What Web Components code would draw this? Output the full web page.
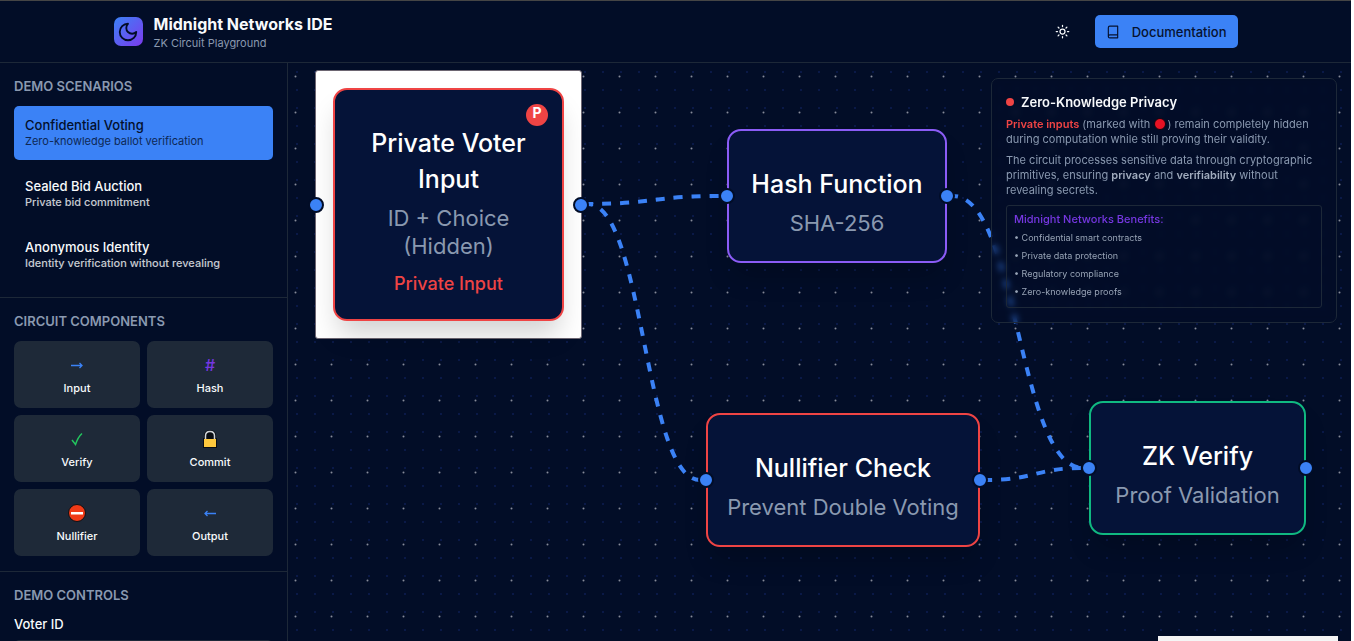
<!DOCTYPE html>
<html lang="en">
<head>
<meta charset="utf-8">
<title>Midnight Networks IDE</title>
<style>
  :root {
    --bg: #020d27; --card: #051338; --line: #1d2838; --muted: #8a99b0; --text: #f8fafc;
    --blue: #3b82f6; --purple: #7637e2; --violet: #8b5cf6; --red: #ef4444; --green: #10b981; --tile: #1e2938;
  }
  body { margin: 0; background: #fff; color: var(--text); font-family: Inter, "Liberation Sans", sans-serif; }
</style>
</head>
<body>
<midnight-app></midnight-app>
<script>
const define = (name, html, setup) => {
  const tpl = document.createElement('template');
  tpl.innerHTML = '<style>*{box-sizing:border-box}</style>' + html;
  customElements.define(name, class extends HTMLElement {
    constructor() {
      super();
      this.attachShadow({ mode: 'open' }).append(tpl.content.cloneNode(true));
    }
    connectedCallback() { if (setup) setup(this, this.shadowRoot); }
  });
};

define('app-header', `
<style>
  :host { display: block; background: var(--bg); border-bottom: 1px solid var(--line); }
  header { display: flex; align-items: center; justify-content: space-between; max-width: 1152px; height: 61px; margin: 0 auto; padding: 0 14px; }
  .brand { display: flex; align-items: center; gap: 11px; }
  .logo { width: 29px; height: 29px; border-radius: 7px; background: linear-gradient(135deg, #3b82f6, #7c3aed); display: grid; place-items: center; }
  h1 { margin: 0; font-size: 16px; line-height: 23px; font-weight: 700; }
  p { margin: 0; font-size: 11px; line-height: 15px; color: var(--muted); }
  .actions { display: flex; align-items: center; gap: 16px; }
  button { border: 0; background: none; color: var(--text); width: 33px; height: 33px; padding: 0; display: grid; place-items: center; }
  a { display: flex; align-items: center; gap: 12px; height: 33px; padding: 0 11px; border-radius: 5px; background: var(--blue); color: #061230; font-size: 13px; font-weight: 500; text-decoration: none; }
  svg { fill: none; stroke: currentColor; stroke-linecap: round; stroke-linejoin: round; stroke-width: 2; display: block; }
</style>
<header>
  <div class="brand">
    <div class="logo"><svg width="22" height="22" viewBox="0 0 24 24" style="color:#020c25"><path d="M12 3a6 6 0 0 0 9 9 9 9 0 1 1-9-9Z"/></svg></div>
    <div><h1>Midnight Networks IDE</h1><p>ZK Circuit Playground</p></div>
  </div>
  <div class="actions">
    <button aria-label="Toggle theme"><svg width="15" height="15" viewBox="0 0 24 24"><circle cx="12" cy="12" r="4"/><path d="M12 2v2M12 20v2M4.93 4.93l1.41 1.41M17.66 17.66l1.41 1.41M2 12h2M20 12h2M6.34 17.66l-1.41 1.41M19.07 4.93l-1.41 1.41"/></svg></button>
    <a href="#docs"><svg width="14" height="14" viewBox="0 0 24 24"><path d="M4 19.5v-15A2.5 2.5 0 0 1 6.5 2H20v20H6.5a2.5 2.5 0 0 1 0-5H20"/></svg>Documentation</a>
  </div>
</header>`);

define('side-section', `
<style>
  :host { display: block; padding: 14px 14px 15px; border-bottom: 1px solid var(--line); }
  h2 { margin: 0 0 11px; font-size: 13px; line-height: 18px; font-weight: 600; text-transform: uppercase; color: var(--muted); }
</style>
<h2></h2><slot></slot>`, (el, root) => { root.querySelector('h2').textContent = el.getAttribute('heading'); });

define('scenario-item', `
<style>
  :host { display: block; }
  button { display: block; width: 100%; height: 54px; padding: 10px 11px 12px; border: 0; border-radius: 5px; background: none; color: var(--text); font: 500 13px/18px Inter, sans-serif; text-align: left; }
  small { display: block; font-size: 11px; line-height: 14px; opacity: .8; font-weight: 500; }
  :host([active]) button { background: var(--blue); color: #03102c; }
  :host([active]) small { font-weight: 400; }
</style>
<button><slot></slot><small><slot name="note"></slot></small></button>`);

define('component-tile', `
<style>
  :host { display: block; }
  button { width: 100%; height: 67px; padding: 0 0 2px; border: 0; border-radius: 7px; background: var(--tile); color: var(--text); font: 500 11px/14px Inter, sans-serif; display: flex; flex-direction: column; align-items: center; justify-content: center; gap: 4px; }
  .icon { height: 24px; display: grid; place-items: center; font-size: 16px; line-height: 24px; }
</style>
<button><span class="icon"><slot name="icon"></slot></span><span><slot></slot></span></button>`);

define('app-sidebar', `
<style>
  :host { display: block; width: 288px; flex: none; border-right: 1px solid var(--line); overflow: hidden; }
  .list { display: grid; gap: 7px; }
  .tiles { display: grid; grid-template-columns: 1fr 1fr; gap: 7px; }
  svg { display: block; fill: none; }
  label { display: block; font-size: 13px; line-height: 18px; font-weight: 500; margin-bottom: 7px; }
  input { width: 100%; height: 36px; border: 1px solid var(--line); border-radius: 5px; background: var(--bg); color: var(--text); padding: 0 11px; font: 13px Inter, sans-serif; }
</style>
<aside>
  <side-section heading="Demo Scenarios"><div class="list">
    <scenario-item active>Confidential Voting<span slot="note">Zero-knowledge ballot verification</span></scenario-item>
    <scenario-item>Sealed Bid Auction<span slot="note">Private bid commitment</span></scenario-item>
    <scenario-item>Anonymous Identity<span slot="note">Identity verification without revealing</span></scenario-item>
  </div></side-section>
  <side-section heading="Circuit Components"><div class="tiles">
    <component-tile><svg slot="icon" width="14" height="14" viewBox="0 0 14 14" stroke="#3b82f6" stroke-width="1.300"><path d="M1 7.500H12M9.500 5L12 7.500L9.500 10"/></svg>Input</component-tile>
    <component-tile><span slot="icon" style="color:var(--purple)">#</span>Hash</component-tile>
    <component-tile><svg slot="icon" width="14" height="16" viewBox="0 0 14 16" stroke="#22c55e" stroke-width="1.500"><path d="M2 9L5.500 13.500Q8 6 12 2.500"/></svg>Verify</component-tile>
    <component-tile><svg slot="icon" width="16" height="20" viewBox="0 0 16 20"><path d="M1 9H2V7Q2 1 8 1T14 7V9H15V19H1Z" fill="#0a0d12"/><path d="M3.500 10V7Q3.500 2.500 8 2.500T12.500 7V10" stroke="#d0d3d8" stroke-width="1.500"/><rect x="2" y="10" width="12" height="8" fill="#ffc83d"/></svg>Commit</component-tile>
    <component-tile><svg slot="icon" width="18" height="18" viewBox="0 0 18 18"><circle cx="9" cy="9" r="8.500" fill="#f03a17" stroke="#0f1014"/><rect x="3" y="8" width="12" height="2.500" fill="#fff"/></svg>Nullifier</component-tile>
    <component-tile><svg slot="icon" width="14" height="14" viewBox="0 0 14 14" stroke="#3b82f6" stroke-width="1.300"><path d="M13 7.500H2M4.500 5L2 7.500L4.500 10"/></svg>Output</component-tile>
  </div></side-section>
  <side-section heading="Demo Controls">
    <label for="voter">Voter ID</label><input id="voter" type="text">
  </side-section>
</aside>`);

define('circuit-node', `
<style>
  :host { display: block; position: absolute; --accent: var(--red); }
  .card { position: relative; border: 2px solid var(--accent); border-radius: 14px; background: var(--card); padding: 35px 14px 24px; text-align: center; box-shadow: 0 18px 27px -5px rgba(0,0,0,.18); }
  h3 { margin: 0 0 7px; font-size: 25px; line-height: 36px; font-weight: 500; color: #fff; }
  p { margin: 0; font-size: 22px; line-height: 28px; color: var(--muted); }
  .note, .badge { display: none; }
  :host([private]) { background: #fff; border: 1px solid #6d6672; border-radius: 3px; padding: 17px; }
  :host([private]) .card { padding-bottom: 23px; }
  :host([private]) .note { display: block; margin-top: 11px; font-size: 18px; line-height: 25px; font-weight: 500; color: var(--red); }
  :host([private]) .badge { display: block; position: absolute; top: 14px; right: 14px; width: 22px; height: 22px; border-radius: 50%; background: var(--red); color: #fff; font-size: 14px; line-height: 18px; font-weight: 700; }
  i { position: absolute; top: 50%; width: 16px; height: 16px; margin-top: -8px; border: 2px solid var(--bg); border-radius: 50%; background: var(--blue); z-index: 1; }
  .in { left: -8px; } .out { right: -8px; }
</style>
<div class="card"><span class="badge">P</span><h3><slot></slot></h3><p><slot name="sub"></slot></p><div class="note"><slot name="note"></slot></div></div>
<i class="in"></i><i class="out"></i>`);

define('privacy-panel', `
<style>
  :host { display: block; position: absolute; top: 15px; right: 14px; width: 346px; padding: 14px; border: 1px solid var(--line); border-radius: 7px; background: rgba(2,13,39,.4); backdrop-filter: blur(3px); }
  h2 { display: flex; align-items: center; gap: 7px; margin: 0 0 6px; font-size: 13px; line-height: 18px; font-weight: 600; }
  h2::before { content: ""; width: 8px; height: 8px; border-radius: 50%; background: var(--red); }
  p { margin: 0 0 6px; font-size: 11px; line-height: 15px; color: var(--muted); }
  b { font-weight: 600; color: #a0abbd; } .r { color: var(--red); }
  svg { vertical-align: -2px; }
  .box { margin-top: 7px; padding: 6px 7px; border: 1px solid var(--line); border-radius: 3px; }
  h3 { margin: 0 0 3px; font-size: 11px; line-height: 14px; font-weight: 500; color: var(--purple); }
  ul { margin: 0; padding: 0; list-style: none; font-size: 9px; line-height: 18px; color: #98a4b6; }
</style>
<h2>Zero-Knowledge Privacy</h2>
<p><b class="r">Private inputs</b> (marked with <svg width="14" height="12" viewBox="0 0 14 12"><circle cx="7" cy="6" r="5.500" fill="#e81224" stroke="#14060f"/></svg>) remain completely hidden during computation while still proving their validity.</p>
<p>The circuit processes sensitive data through cryptographic primitives, ensuring <b>privacy</b> and <b>verifiability</b> without revealing secrets.</p>
<div class="box"><h3>Midnight Networks Benefits:</h3>
<ul><li>• Confidential smart contracts</li><li>• Private data protection</li><li>• Regulatory compliance</li><li>• Zero-knowledge proofs</li></ul></div>`);

define('circuit-canvas', `
<style>
  :host { display: block; position: relative; flex: 1; min-width: 0; overflow: hidden; }
  .grid { position: absolute; inset: 0; }
  .edges { position: absolute; left: 0; top: 0; width: 100%; height: 100%; fill: none; stroke: var(--blue); stroke-width: 4; stroke-dasharray: 9; stroke-dashoffset: 4; }
  .map { position: absolute; right: 13px; bottom: -130px; width: 180px; height: 135px; background: #f5f5f5; }
</style>
<svg class="grid" width="100%" height="100%">
  <defs>
    <pattern id="minor" width="18" height="18" patternUnits="userSpaceOnUse"><rect x="8" y="8" width="2" height="2" fill="#0a1947"/></pattern>
    <pattern id="major" width="36" height="36" patternUnits="userSpaceOnUse"><circle cx="7.500" cy="13.500" r="1" fill="#868a99"/></pattern>
  </defs>
  <rect width="100%" height="100%" fill="#020d27"/>
  <rect width="100%" height="100%" fill="url(#minor)"/>
  <rect width="100%" height="100%" fill="url(#major)"/>
</svg>
<svg class="edges">
  <path d="M300 141C365 141 365 133 432 133"/>
  <path d="M300 141C356 141 356 417 412 417"/>
  <path d="M665 133C730 133 730 405 795 405"/>
  <path d="M699 417C747 417 747 405 795 405"/>
</svg>
<circuit-node private style="left:27px;top:7px;width:267px">Private Voter Input<span slot="sub">ID + Choice (Hidden)</span><span slot="note">Private Input</span></circuit-node>
<circuit-node style="left:439px;top:66px;width:220px;--accent:var(--violet)">Hash Function<span slot="sub">SHA-256</span></circuit-node>
<circuit-node style="left:418px;top:350px;width:274px">Nullifier Check<span slot="sub">Prevent Double Voting</span></circuit-node>
<circuit-node style="left:801px;top:338px;width:217px;--accent:var(--green)">ZK Verify<span slot="sub">Proof Validation</span></circuit-node>
<privacy-panel></privacy-panel>
<div class="map"></div>`);

define('midnight-app', `
<style>
  :host { display: flex; flex-direction: column; height: 100vh; margin-right: 3px; overflow: hidden; background: var(--bg); border-top: 1px solid #454545; box-sizing: border-box; }
  main { display: flex; flex: 1; min-height: 0; }
</style>
<app-header></app-header>
<main><app-sidebar></app-sidebar><circuit-canvas></circuit-canvas></main>`);
</script>
</body>
</html>
